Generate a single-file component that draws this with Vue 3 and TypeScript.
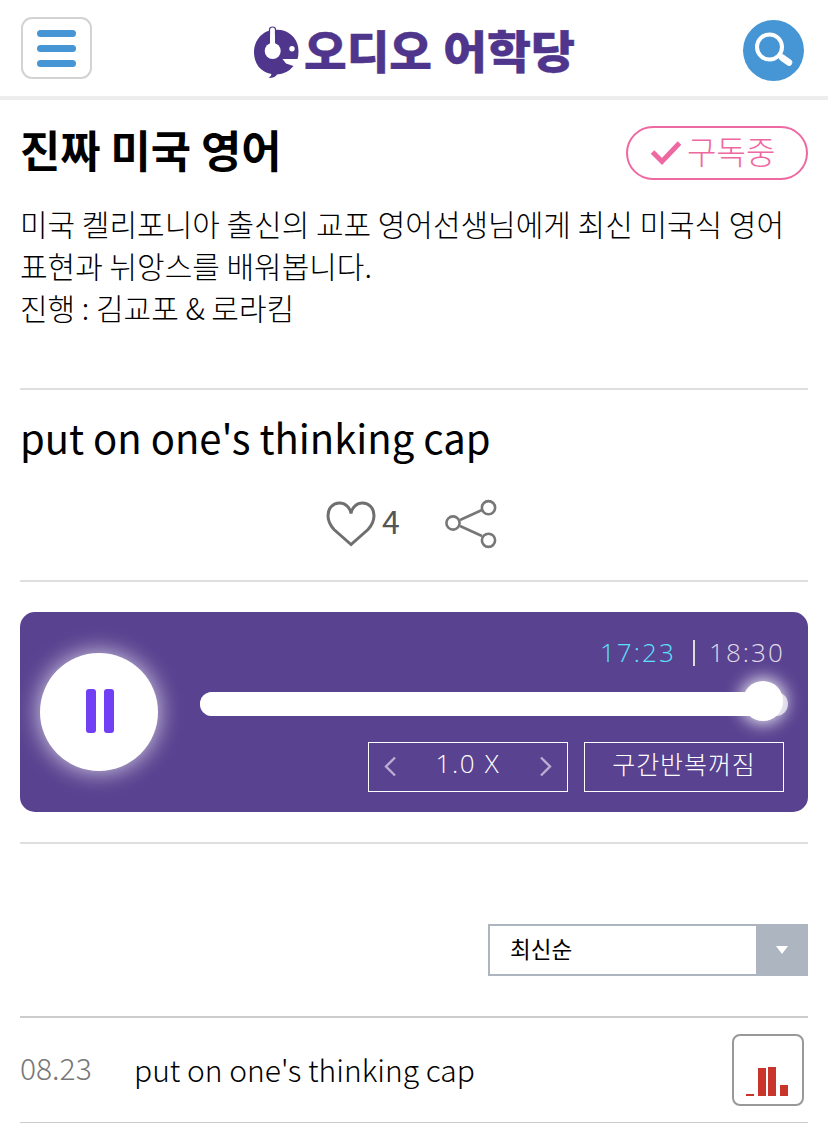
<script setup lang="ts">
import { ref } from 'vue'

interface Episode {
  date: string
  title: string
  levels: { gap: number; height: number }[]
}

const liked = ref(4)
const elapsed = ref('17:23')
const total = ref('18:30')
const speed = ref('1.0 X')
const description = [
  '미국 켈리포니아 출신의 교포 영어선생님에게 최신 미국식 영어',
  '표현과 뉘앙스를 배워봅니다.',
  '진행 : 김교포 & 로라킴',
]
const episodes: Episode[] = [
  {
    date: '08.23',
    title: "put on one's thinking cap",
    levels: [
      { gap: 0, height: 2 },
      { gap: 4, height: 28 },
      { gap: 2, height: 29 },
      { gap: 4, height: 11 },
    ],
  },
]
</script>

<template>
  <div class="page">
    <header class="topbar">
      <button class="menu" aria-label="메뉴"><i></i><i></i><i></i></button>
      <svg class="logo" width="326" height="60" viewBox="0 0 326 60">
        <path
          fill="#4f358b"
          d="M14 11Q21 9 27 10C38 12 44.500 21 44.500 31Q44.500 36 43.500 39L28.500 39L32 43.500L39.500 46Q33 54 23 54.500Q21 58 14.500 58Q17.500 56 17.500 54C6 52 0 43 0 32C0 22 6 14 14 11Z"
        />
        <path fill="#fff" stroke="#4f358b" stroke-width="1.200" d="M15.500 26V9.500Q15.500 7 18.500 7Q21.500 7 21.500 9.500V26Z" />
        <circle cx="18.700" cy="31" r="8" fill="#fff" />
        <rect x="16.200" y="15" width="4.600" height="13" fill="#fff" />
        <circle cx="38" cy="28.700" r="2.700" fill="#fff" />
        <text class="mark" transform="translate(50 49) scale(1 0.960)" textLength="128" lengthAdjust="spacingAndGlyphs">오디오</text>
        <text class="mark" transform="translate(189 49) scale(1 0.960)" textLength="132" lengthAdjust="spacingAndGlyphs">어학당</text>
      </svg>
      <button class="search" aria-label="검색">
        <svg width="61" height="61" viewBox="0 0 61 61" fill="none" stroke="#fff">
          <circle cx="26.500" cy="27" r="12.500" stroke-width="4" />
          <path d="M36.500 35.500L38.500 37" stroke-width="4" />
          <path d="M39 37.500L46 42.500" stroke-width="6.500" stroke-linecap="round" />
        </svg>
      </button>
    </header>

    <main class="content">
      <div class="title-row">
        <h1>진짜 미국 영어</h1>
        <button class="subscribe">
          <svg width="32" height="26" viewBox="0 0 32 26" fill="none">
            <path d="M2.500 12L12 21.500L29.500 3" stroke="#ee68a1" stroke-width="5" />
          </svg>
          <span>구독중</span>
        </button>
      </div>
      <div class="description">
        <div v-for="line in description" :key="line">{{ line }}</div>
      </div>

      <section class="current">
        <h2>put on one's thinking cap</h2>
        <div class="actions">
          <svg width="50" height="46" viewBox="0 0 50 46" fill="none" stroke="#6f6f6f" stroke-width="3">
            <path d="M25 43.500L8 28.500Q2 22 2 14.500C2 7 7 2 13.500 2C19 2 24 6 25 12.500C26 6 31 2 36.500 2C43 2 48 7 48 14.500Q48 22 42 28.500Z" />
          </svg>
          <span class="count">{{ liked }}</span>
          <svg class="share" width="52" height="50" viewBox="0 0 52 50" fill="none" stroke="#777" stroke-width="2.600">
            <path d="M15 21L37 11M15 27L37 37" />
            <circle cx="8" cy="24" r="6.600" />
            <circle cx="43.500" cy="8.700" r="6.600" />
            <circle cx="43.500" cy="41.300" r="6.600" />
          </svg>
        </div>
      </section>

      <section class="player">
        <button class="pause" aria-label="일시정지"><i></i><i></i></button>
        <div class="controls">
          <div class="times">
            <span class="elapsed">{{ elapsed }}</span>
            <i class="bar"></i>
            <span class="total">{{ total }}</span>
          </div>
          <div class="track"><i class="fill"></i><i class="knob"></i></div>
          <div class="options">
            <div class="box speed">
              <svg width="14" height="22" viewBox="0 0 14 22" fill="none"><path d="M12 1.500L3 10.500L12 19.500" stroke="#b9add2" stroke-width="2.400" /></svg>
              <span>{{ speed }}</span>
              <svg width="14" height="22" viewBox="0 0 14 22" fill="none"><path d="M2 1.500L11 10.500L2 19.500" stroke="#b9add2" stroke-width="2.400" /></svg>
            </div>
            <div class="box repeat"><span>구간반복꺼짐</span></div>
          </div>
        </div>
      </section>

      <div class="sorting">
        <div class="select">
          <span>최신순</span>
          <i class="arrow"><svg width="14" height="10" viewBox="0 0 14 10"><path d="M1 1H13L7 9Z" fill="#fff" /></svg></i>
        </div>
      </div>

      <ul class="episodes">
        <li v-for="episode in episodes" :key="episode.date">
          <span class="date">{{ episode.date }}</span>
          <span class="name">{{ episode.title }}</span>
          <button class="chart" aria-label="재생중">
            <i
              v-for="(level, index) in episode.levels"
              :key="index"
              :style="{ marginLeft: level.gap + 'px', height: level.height + 'px' }"
            ></i>
          </button>
        </li>
      </ul>
    </main>
  </div>
</template>

<style>
body {
  margin: 0;
  background: #fff;
}
</style>

<style scoped>
* {
  box-sizing: border-box;
}
.page {
  height: 1123px;
  overflow: hidden;
  font-family: 'Noto Sans CJK KR', 'Noto Sans', sans-serif;
  font-weight: 300;
  color: #000;
}
button {
  padding: 0;
  font: inherit;
  background: #fff;
}
svg {
  display: block;
  flex: none;
}
i {
  display: block;
  flex: none;
}
.topbar {
  display: flex;
  justify-content: space-between;
  align-items: flex-start;
  height: 100px;
  padding: 17px 24px 0 21px;
  border-bottom: 4px solid #ededed;
}
.menu {
  display: flex;
  flex-direction: column;
  align-items: center;
  gap: 8px;
  width: 71px;
  height: 62px;
  padding-top: 11px;
  border: 2px solid #d3d3d3;
  border-radius: 11px;
}
.menu i {
  width: 39px;
  height: 7px;
  border-radius: 4px;
  background: #4696d5;
}
.logo {
  margin: 3px 0 0 -1px;
  overflow: visible;
}
.mark {
  font-size: 47px;
  font-weight: 900;
  fill: #4f358b;
  stroke: #4f358b;
  stroke-width: 0.400px;
}
.search {
  width: 61px;
  height: 61px;
  margin-top: 3px;
  border: 0;
  border-radius: 50%;
  background: #4696d5;
}
.content {
  padding: 26px 20px 0;
}
.title-row {
  display: flex;
  justify-content: space-between;
  height: 54px;
}
h1 {
  margin: 0;
  font-size: 43.800px;
  font-weight: 700;
  line-height: 46px;
}
.subscribe {
  display: flex;
  align-items: center;
  gap: 5px;
  width: 182px;
  height: 54px;
  padding-left: 22px;
  border: 2px solid #ee68a1;
  border-radius: 27px;
  color: #ee68a1;
  font-size: 32px;
  line-height: 50px;
}
.subscribe span {
  margin-top: -6px;
}
.description {
  height: 210px;
  padding-top: 22px;
  border-bottom: 2px solid #dfdfdf;
  font-size: 30px;
  line-height: 42px;
  white-space: nowrap;
}
.current {
  height: 192px;
  padding-top: 17px;
  border-bottom: 2px solid #dfdfdf;
}
h2 {
  margin: 0;
  font-size: 40px;
  font-weight: 400;
  line-height: 60px;
}
.actions {
  display: flex;
  align-items: center;
  height: 50px;
  margin: 32px 0 0 306px;
}
.count {
  margin: -8px 45px 0 6px;
  font-size: 32px;
  font-weight: 400;
  line-height: 48px;
  color: #555;
}
.player {
  display: flex;
  height: 200px;
  margin-top: 30px;
  padding: 0 24px 0 20px;
  border-radius: 15px;
  background: #594290;
}
.pause {
  display: flex;
  flex: none;
  justify-content: center;
  align-items: center;
  gap: 8px;
  width: 118px;
  height: 118px;
  margin-top: 41px;
  padding: 0 0 2px 2px;
  border: 0;
  border-radius: 50%;
  box-shadow: 0 0 24px rgba(255, 255, 255, 0.8);
}
.pause i {
  width: 10px;
  height: 44px;
  border-radius: 3px;
  background: #7140f5;
}
.controls {
  flex: 1;
  min-width: 0;
  margin-left: 42px;
}
.times {
  display: flex;
  justify-content: flex-end;
  align-items: center;
  height: 80px;
  font-family: 'Open Sans', sans-serif;
  font-size: 26px;
  letter-spacing: 2.100px;
  line-height: 30px;
}
.elapsed {
  color: #5ce0ff;
}
.bar {
  width: 2px;
  height: 26px;
  margin: 2px 14px 0 17px;
  background: #ddd;
}
.total {
  color: #e0dce6;
  margin-right: -1px;
}
.track {
  position: relative;
  width: 588px;
  height: 24px;
  border-radius: 12px;
  background: #cdc6dd;
}
.fill {
  width: 560px;
  height: 24px;
  border-radius: 12px;
  background: #fff;
}
.knob {
  position: absolute;
  top: -11px;
  left: 543px;
  width: 40px;
  height: 40px;
  border-radius: 50%;
  background: #fff;
  box-shadow: 0 0 18px 2px #fff;
}
.options {
  display: flex;
  justify-content: flex-end;
  gap: 16px;
  margin-top: 26px;
}
.box {
  display: flex;
  align-items: center;
  width: 200px;
  height: 50px;
  border: 1px solid #fff;
  color: #fff;
  font-size: 25px;
  line-height: 40px;
}
.speed {
  justify-content: space-between;
  padding: 0 14px;
  font-family: 'Open Sans', sans-serif;
  font-size: 26px;
  letter-spacing: 1.700px;
}
.speed span,
.repeat span {
  margin-top: -9px;
}
.repeat {
  justify-content: center;
  letter-spacing: 0.900px;
}
.sorting {
  display: flex;
  justify-content: flex-end;
  height: 174px;
  margin-top: 30px;
  padding-top: 80px;
  border-top: 2px solid #dfdfdf;
}
.select {
  display: flex;
  justify-content: space-between;
  width: 320px;
  height: 52px;
  padding-left: 20px;
  border: 2px solid #adb6c0;
  font-size: 22.500px;
  font-weight: 400;
  line-height: 44px;
}
.arrow {
  display: flex;
  justify-content: center;
  align-items: center;
  width: 50px;
  padding-left: 2px;
  background: #adb6c0;
}
.episodes {
  margin: 0;
  padding: 0;
  list-style: none;
  border-top: 2px solid #ccc;
}
.episodes li {
  display: flex;
  align-items: center;
  height: 105px;
  padding-right: 4px;
  border-bottom: 1px solid #ccc;
}
.date {
  width: 114px;
  margin-top: -6px;
  font-size: 30px;
  color: #777;
}
.name {
  flex: 1;
  margin-top: -2px;
  font-size: 30px;
}
.chart {
  display: flex;
  align-items: flex-end;
  width: 72px;
  height: 72px;
  padding: 0 0 8px 12px;
  border: 2px solid #999;
  border-radius: 8px;
}
.chart i {
  width: 8px;
  background: #c9352b;
}
</style>
